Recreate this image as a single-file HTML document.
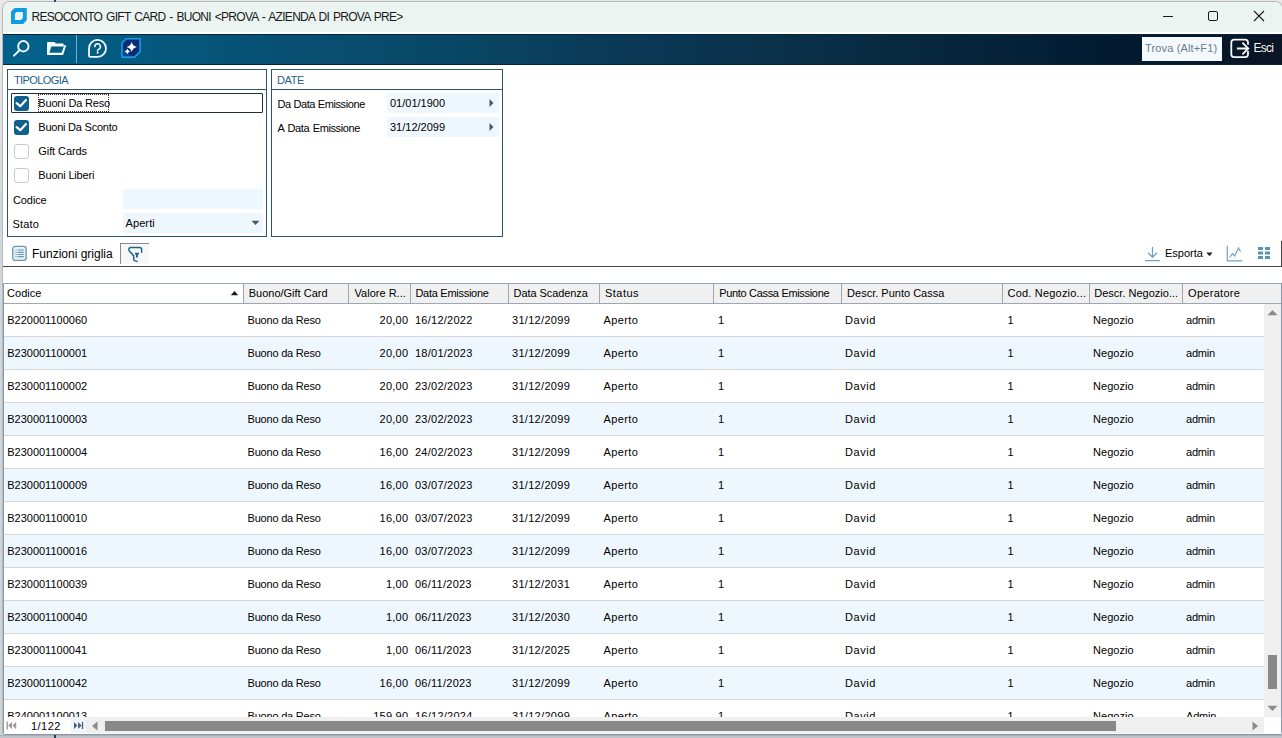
<!DOCTYPE html>
<html><head><meta charset="utf-8">
<style>
*{box-sizing:border-box;margin:0;padding:0}
html,body{width:1282px;height:738px;overflow:hidden;background:#b6b8ba;font-family:"Liberation Sans",sans-serif;font-size:11px;color:#000}
div,span,svg{position:absolute}
.t{white-space:nowrap;letter-spacing:-0.3px;line-height:13px}
.panel{border:1px solid #2b556d;background:#fff}
.cb{width:15px;height:15px;border-radius:3px}
.on{background:#1a6a96}
.off{border:1px solid #c9c9c9;background:#fff}
.inp{background:#eef7fd}
.hc{top:284px;height:19px;background:#f0f0f0;border-right:1px solid #9ca7b3}
.row{left:4px;width:1260px;height:33px;border-bottom:1px solid #d6d9dc;background:#fff}
.alt{background:#eef7fd}
</style></head><body>
<div style="left:0;top:0;width:1282px;height:738px;background:linear-gradient(180deg,#e8e8e8 0px,#e6e6e6 80px,#d0d8dc 200px,#cdd4d7 738px)"></div>
<div style="left:0;top:735px;width:1282px;height:1px;background:#a8b0b8"></div>
<div style="left:0;top:736px;width:1282px;height:2px;background:#c0c4c8"></div>
<div style="left:54px;top:735px;width:2px;height:3px;background:#1a4262"></div>
<div style="left:2px;top:1px;width:1281px;height:734px;border:1px solid #b5b9bb;border-bottom-color:#8a96a6;border-radius:8px 8px 4px 4px;background:#fff"></div>
<div style="left:3px;top:2px;width:1279px;height:30px;background:#ebf4f1;border-radius:7px 7px 0 0"></div>

<svg style="left:11px;top:8px" width="17" height="16" viewBox="0 0 17 16"><path d="M3.5 0H15.8V11.9L12.2 16H0V3.4Z" fill="#109de0"/><path d="M5.7 3.9H11.9V9.9L9.9 11.9H3.9V5.7Z" fill="#ebf4f1"/></svg>
<span class="t" style="left:31.5px;top:11px;font-size:12px;letter-spacing:-0.72px;word-spacing:1.3px;color:#1a1a1a">RESOCONTO GIFT CARD - BUONI &lt;PROVA - AZIENDA DI PROVA PRE&gt;</span>
<div style="left:1163px;top:16px;width:10px;height:1px;background:#1a1a1a"></div>
<div style="left:1208px;top:11px;width:10px;height:10px;border:1px solid #1a1a1a;border-radius:2px"></div>
<svg style="left:1253px;top:10px" width="12" height="12" viewBox="0 0 12 12"><path d="M1 1L11 11M11 1L1 11" stroke="#1a1a1a" stroke-width="1.1"/></svg>

<div style="left:3px;top:34px;width:1279px;height:31px;background:linear-gradient(90deg,#02628c 0px,#05587d 156px,#084f72 296px,#094766 446px,#0a3a58 596px,#0a3048 796px,#052238 1006px,#011a30 1116px,#0a1526 1277px);border-top:1px solid #05253a;border-bottom:1px solid #052538"></div>
<svg style="left:10px;top:38px" width="24" height="22" viewBox="0 0 24 22"><circle cx="13.35" cy="8.25" r="5.2" fill="none" stroke="#f2fbff" stroke-width="1.9"/><path d="M9.4 12.2L4 17.6" stroke="#f2fbff" stroke-width="2" stroke-linecap="round"/></svg>
<svg style="left:44px;top:38px" width="26" height="20" viewBox="0 0 26 20"><path fill-rule="evenodd" d="M4.2 3.9H10.3L12 5.6H19.5V7.3H22.3L19.1 17.1H4.2Q3 17.1 3 15.9V5.1Q3 3.9 4.2 3.9Z M7.3 8.6H19.9L17.6 14.8H5.4Z" fill="#f4fbff"/></svg>
<div style="left:76px;top:35px;width:1px;height:28px;background:#6fb2d4"></div>
<svg style="left:86px;top:37px" width="24" height="24" viewBox="0 0 24 24"><path d="M3 11.4A8.5 8.5 0 1 1 11.5 19.9H4.6Q3 19.9 3 18.3Z" fill="none" stroke="#f4fbff" stroke-width="1.8" stroke-linejoin="round"/><path d="M8.8 9.6A2.8 2.8 0 1 1 12.9 12.1C11.9 12.6 11.5 13 11.5 14" fill="none" stroke="#f4fbff" stroke-width="1.6" stroke-linecap="round"/><circle cx="11.6" cy="15.8" r="1" fill="#f4fbff"/></svg>
<svg style="left:120px;top:37px" width="22" height="22" viewBox="0 0 22 22"><path d="M6.2 1.7H20.1V14.6L14.6 20.1H2V5.9Z" fill="#082c76" stroke="#1c9be3" stroke-width="1.6" stroke-linejoin="round"/><path d="M2.9 11L11 19.2H2.9Z" fill="#1560b0" opacity="0.45"/><path d="M11.7 4.7Q12.549999999999999 9.05 16.9 9.9Q12.549999999999999 10.75 11.7 15.100000000000001Q10.85 10.75 6.499999999999999 9.9Q10.85 9.05 11.7 4.7Z" fill="#fff"/><path d="M7.4 11.8Q8.15 13.65 10.0 14.4Q8.15 15.15 7.4 17.0Q6.65 15.15 4.800000000000001 14.4Q6.65 13.65 7.4 11.8Z" fill="#fff"/></svg>
<div style="left:1142px;top:37px;width:80px;height:24px;background:#f3f9fd"></div>
<span class="t" style="left:1145px;top:42px;color:#6d7c8a;letter-spacing:0.15px">Trova (Alt+F1)</span>
<svg style="left:1229px;top:38px" width="22" height="22" viewBox="0 0 22 22"><path d="M19 6.8V4.5Q19 1.7 16.2 1.7H5.1Q2.3 1.7 2.3 4.5V16.3Q2.3 19.1 5.1 19.1H16.2Q19 19.1 19 16.3V13.1" fill="none" stroke="#f4f8fa" stroke-width="1.8"/><path d="M7.9 10.5H19.2M13.4 4.6L19.3 10.5L13.4 16.3" fill="none" stroke="#f4f8fa" stroke-width="1.8" stroke-linejoin="miter"/></svg>
<span class="t" style="left:1253.5px;top:41.5px;font-size:12px;color:#f4f4ec;letter-spacing:-0.75px">Esci</span>

<div class="panel" style="left:7px;top:69px;width:260px;height:168px"></div>
<div style="left:8px;top:89px;width:258px;height:1px;background:#2b556d"></div>
<span class="t" style="left:14px;top:73.5px;color:#23628a;letter-spacing:-0.6px">TIPOLOGIA</span>
<div style="left:11px;top:93px;width:252px;height:20px;border:1px solid #1f2d36;border-radius:1px"></div>
<div style="left:38px;top:94px;width:71px;height:18px;border:1px dotted #333"></div>

<svg style="left:14px;top:96px" width="15" height="15" viewBox="0 0 15 15"><rect x="0" y="0" width="15" height="15" rx="3" fill="#115f8c"/><path d="M2.6 7.1L6.3 10.2L12 4.1" fill="none" stroke="#fff" stroke-width="2.2" stroke-linecap="round" stroke-linejoin="round"/></svg>
<svg style="left:14px;top:120px" width="15" height="15" viewBox="0 0 15 15"><rect x="0" y="0" width="15" height="15" rx="3" fill="#115f8c"/><path d="M2.6 7.1L6.3 10.2L12 4.1" fill="none" stroke="#fff" stroke-width="2.2" stroke-linecap="round" stroke-linejoin="round"/></svg>
<div class="cb off" style="left:14px;top:144px"></div>
<div class="cb off" style="left:14px;top:168px"></div>
<span class="t" style="left:38.3px;top:96.5px;letter-spacing:-0.18px">Buoni Da Reso</span>
<span class="t" style="left:38.3px;top:120.5px;letter-spacing:-0.23px">Buoni Da Sconto</span>
<span class="t" style="left:38.3px;top:144.5px;letter-spacing:-0.08px">Gift Cards</span>
<span class="t" style="left:38.3px;top:168.5px;letter-spacing:-0.18px">Buoni Liberi</span>
<span class="t" style="left:13px;top:193.5px;letter-spacing:-0.1px">Codice</span>
<div class="inp" style="left:123px;top:189px;width:140px;height:20px"></div>
<span class="t" style="left:12.5px;top:217.5px;letter-spacing:0.2px">Stato</span>
<div class="inp" style="left:123px;top:213px;width:140px;height:20px"></div>
<span class="t" style="left:125.5px;top:216.5px;letter-spacing:0.1px">Aperti</span>
<svg style="left:251px;top:220px" width="9" height="6" viewBox="0 0 9 6"><path d="M0.5 0.8H8.5L4.5 5Z" fill="#48586c"/></svg>

<div class="panel" style="left:271px;top:69px;width:232px;height:168px"></div>
<div style="left:272px;top:89px;width:230px;height:1px;background:#2b556d"></div>
<span class="t" style="left:277px;top:73.5px;color:#23628a;letter-spacing:-0.4px">DATE</span>
<span class="t" style="left:277.5px;top:97.5px;letter-spacing:-0.4px">Da Data Emissione</span>
<div class="inp" style="left:387px;top:93px;width:112px;height:20px"></div>
<span class="t" style="left:390px;top:96.5px;letter-spacing:0">01/01/1900</span>
<svg style="left:489px;top:99px" width="5" height="8" viewBox="0 0 5 8"><path d="M0.5 0L4.5 4L0.5 8Z" fill="#48586c"/></svg>
<span class="t" style="left:277.5px;top:121.5px;letter-spacing:-0.4px;word-spacing:1px">A Data Emissione</span>
<div class="inp" style="left:387px;top:117px;width:112px;height:20px"></div>
<span class="t" style="left:390px;top:120.5px;letter-spacing:0">31/12/2099</span>
<svg style="left:489px;top:123px" width="5" height="8" viewBox="0 0 5 8"><path d="M0.5 0L4.5 4L0.5 8Z" fill="#48586c"/></svg>

<svg style="left:12px;top:245px" width="16" height="17" viewBox="0 0 16 17"><rect x="0.75" y="1.45" width="13.4" height="14" rx="2.6" fill="#e2f4fb" stroke="#6f93a8" stroke-width="1.3"/><path d="M3.1 5H5.6M3.1 7.4H5.6M3.1 9.5H5.6M3.1 11.7H5.6" stroke="#a9bac3" stroke-width="1.2"/><path d="M6 5H11.8M6 7.4H11.8M6 9.5H11.8M6 11.7H11.8" stroke="#6b95ab" stroke-width="1.2"/></svg>
<span class="t" style="left:32px;top:247.5px;font-size:12px;letter-spacing:0">Funzioni griglia</span>
<div style="left:120px;top:243px;width:29px;height:21px;border-left:1px solid #8a8a8a;border-top:1px solid #8a8a8a;background:#f7f7f7"></div>
<svg style="left:128px;top:246px" width="16" height="17" viewBox="0 0 16 17"><path d="M13.6 6.3V3.6Q13.6 1.5 11.6 1.5H2.9Q0.9 1.5 0.9 3.6Q0.9 4.7 1.8 5.6L5.7 9.8V12.9Q5.7 14.1 6.6 14.6L8.9 15.4" fill="none" stroke="#1d6488" stroke-width="1.5" stroke-linecap="round"/><path d="M6.9 7.6H11M9 7.6V11.6" stroke="#1d6488" stroke-width="1.9"/></svg>
<div style="left:3px;top:266px;width:1279px;height:1px;background:#444"></div>
<div style="left:1281px;top:241px;width:1px;height:26px;background:#444"></div>
<svg style="left:1144px;top:246px" width="17" height="16" viewBox="0 0 17 16"><path d="M8.5 1V11M4 6.8L8.5 11.3L13 6.8" fill="none" stroke="#6fa4bf" stroke-width="1.3"/><path d="M1 14.6H16" stroke="#6fa4bf" stroke-width="1.3"/></svg>
<span class="t" style="left:1165px;top:246.5px;letter-spacing:0">Esporta</span>
<svg style="left:1206px;top:252px" width="7" height="5" viewBox="0 0 7 5"><path d="M0.3 0.5H6.7L3.5 4.2Z" fill="#222"/></svg>
<svg style="left:1226px;top:245px" width="17" height="17" viewBox="0 0 17 17"><path d="M1.3 0.8V15.8H16.2" fill="none" stroke="#6fa4bf" stroke-width="1.2"/><path d="M3.5 12.5L6.5 8.6L8.7 11L12.4 3L14.6 6.6" fill="none" stroke="#6fa4bf" stroke-width="1.2"/></svg>
<svg style="left:1257px;top:246px" width="14" height="14" viewBox="0 0 14 14"><g fill="#5d94b0"><rect x="1" y="1" width="5" height="3"/><rect x="8" y="1" width="5" height="3"/><rect x="1" y="5.5" width="5" height="3"/><rect x="8" y="5.5" width="5" height="3"/><rect x="1" y="10" width="5" height="3"/><rect x="8" y="10" width="5" height="3"/></g></svg>

<div style="left:4px;top:283px;width:1278px;height:21px;border-top:1px solid #9ca7b3;border-bottom:1px solid #9ca7b3;border-right:1px solid #9ca7b3;background:#f0f0f0"></div>
<div class="hc" style="left:4px;width:240px;background:#fff"></div>
<span class="t" style="left:7.1px;top:287px;letter-spacing:0px">Codice</span>
<div class="hc" style="left:244px;width:105px;background:#f0f0f0"></div>
<span class="t" style="left:248.7px;top:287px;letter-spacing:0px">Buono/Gift Card</span>
<div class="hc" style="left:349px;width:62px;background:#f0f0f0"></div>
<span class="t" style="left:354.6px;top:287px;letter-spacing:0px">Valore R...</span>
<div class="hc" style="left:411px;width:98px;background:#f0f0f0"></div>
<span class="t" style="left:415.4px;top:287px;letter-spacing:-0.27px">Data Emissione</span>
<div class="hc" style="left:509px;width:91px;background:#f0f0f0"></div>
<span class="t" style="left:513.6px;top:287px;letter-spacing:-0.08px">Data Scadenza</span>
<div class="hc" style="left:600px;width:114px;background:#f0f0f0"></div>
<span class="t" style="left:605px;top:287px;letter-spacing:0.46px">Status</span>
<div class="hc" style="left:714px;width:128px;background:#f0f0f0"></div>
<span class="t" style="left:719.2px;top:287px;letter-spacing:-0.32px">Punto Cassa Emissione</span>
<div class="hc" style="left:842px;width:161px;background:#f0f0f0"></div>
<span class="t" style="left:847.1px;top:287px;letter-spacing:0px">Descr. Punto Cassa</span>
<div class="hc" style="left:1003px;width:87px;background:#f0f0f0"></div>
<span class="t" style="left:1007.5px;top:287px;letter-spacing:0.2px">Cod. Negozio...</span>
<div class="hc" style="left:1090px;width:93px;background:#f0f0f0"></div>
<span class="t" style="left:1094.3px;top:287px;letter-spacing:0px">Descr. Negozio...</span>
<div class="hc" style="left:1183px;width:99px;background:#f0f0f0"></div>
<span class="t" style="left:1188.1px;top:287px;letter-spacing:0.29px">Operatore</span>
<svg style="left:230px;top:290px" width="9" height="6" viewBox="0 0 9 6"><path d="M0.8 5.2H8.2L4.5 1Z" fill="#1a1a1a"/></svg>
<div class="row" style="top:304px"></div>
<span class="t" style="left:7.2px;top:314px;letter-spacing:0px">B220001100060</span>
<span class="t" style="left:247.5px;top:314px;letter-spacing:-0.2px">Buono da Reso</span>
<span class="t" style="right:873.7px;top:314px;letter-spacing:0.25px">20,00</span>
<span class="t" style="left:415px;top:314px;letter-spacing:0.25px">16/12/2022</span>
<span class="t" style="left:512px;top:314px;letter-spacing:0.3px">31/12/2099</span>
<span class="t" style="left:603.5px;top:314px;letter-spacing:0.4px">Aperto</span>
<span class="t" style="left:718px;top:314px;letter-spacing:0px">1</span>
<span class="t" style="left:845px;top:314px;letter-spacing:0.55px">David</span>
<span class="t" style="left:1007.5px;top:314px;letter-spacing:0px">1</span>
<span class="t" style="left:1093px;top:314px;letter-spacing:0.05px">Negozio</span>
<span class="t" style="left:1186px;top:314px;letter-spacing:-0.2px">admin</span>
<div class="row alt" style="top:337px"></div>
<span class="t" style="left:7.2px;top:347px;letter-spacing:0px">B230001100001</span>
<span class="t" style="left:247.5px;top:347px;letter-spacing:-0.2px">Buono da Reso</span>
<span class="t" style="right:873.7px;top:347px;letter-spacing:0.25px">20,00</span>
<span class="t" style="left:415px;top:347px;letter-spacing:0.25px">18/01/2023</span>
<span class="t" style="left:512px;top:347px;letter-spacing:0.3px">31/12/2099</span>
<span class="t" style="left:603.5px;top:347px;letter-spacing:0.4px">Aperto</span>
<span class="t" style="left:718px;top:347px;letter-spacing:0px">1</span>
<span class="t" style="left:845px;top:347px;letter-spacing:0.55px">David</span>
<span class="t" style="left:1007.5px;top:347px;letter-spacing:0px">1</span>
<span class="t" style="left:1093px;top:347px;letter-spacing:0.05px">Negozio</span>
<span class="t" style="left:1186px;top:347px;letter-spacing:-0.2px">admin</span>
<div class="row" style="top:370px"></div>
<span class="t" style="left:7.2px;top:380px;letter-spacing:0px">B230001100002</span>
<span class="t" style="left:247.5px;top:380px;letter-spacing:-0.2px">Buono da Reso</span>
<span class="t" style="right:873.7px;top:380px;letter-spacing:0.25px">20,00</span>
<span class="t" style="left:415px;top:380px;letter-spacing:0.25px">23/02/2023</span>
<span class="t" style="left:512px;top:380px;letter-spacing:0.3px">31/12/2099</span>
<span class="t" style="left:603.5px;top:380px;letter-spacing:0.4px">Aperto</span>
<span class="t" style="left:718px;top:380px;letter-spacing:0px">1</span>
<span class="t" style="left:845px;top:380px;letter-spacing:0.55px">David</span>
<span class="t" style="left:1007.5px;top:380px;letter-spacing:0px">1</span>
<span class="t" style="left:1093px;top:380px;letter-spacing:0.05px">Negozio</span>
<span class="t" style="left:1186px;top:380px;letter-spacing:-0.2px">admin</span>
<div class="row alt" style="top:403px"></div>
<span class="t" style="left:7.2px;top:413px;letter-spacing:0px">B230001100003</span>
<span class="t" style="left:247.5px;top:413px;letter-spacing:-0.2px">Buono da Reso</span>
<span class="t" style="right:873.7px;top:413px;letter-spacing:0.25px">20,00</span>
<span class="t" style="left:415px;top:413px;letter-spacing:0.25px">23/02/2023</span>
<span class="t" style="left:512px;top:413px;letter-spacing:0.3px">31/12/2099</span>
<span class="t" style="left:603.5px;top:413px;letter-spacing:0.4px">Aperto</span>
<span class="t" style="left:718px;top:413px;letter-spacing:0px">1</span>
<span class="t" style="left:845px;top:413px;letter-spacing:0.55px">David</span>
<span class="t" style="left:1007.5px;top:413px;letter-spacing:0px">1</span>
<span class="t" style="left:1093px;top:413px;letter-spacing:0.05px">Negozio</span>
<span class="t" style="left:1186px;top:413px;letter-spacing:-0.2px">admin</span>
<div class="row" style="top:436px"></div>
<span class="t" style="left:7.2px;top:446px;letter-spacing:0px">B230001100004</span>
<span class="t" style="left:247.5px;top:446px;letter-spacing:-0.2px">Buono da Reso</span>
<span class="t" style="right:873.7px;top:446px;letter-spacing:0.25px">16,00</span>
<span class="t" style="left:415px;top:446px;letter-spacing:0.25px">24/02/2023</span>
<span class="t" style="left:512px;top:446px;letter-spacing:0.3px">31/12/2099</span>
<span class="t" style="left:603.5px;top:446px;letter-spacing:0.4px">Aperto</span>
<span class="t" style="left:718px;top:446px;letter-spacing:0px">1</span>
<span class="t" style="left:845px;top:446px;letter-spacing:0.55px">David</span>
<span class="t" style="left:1007.5px;top:446px;letter-spacing:0px">1</span>
<span class="t" style="left:1093px;top:446px;letter-spacing:0.05px">Negozio</span>
<span class="t" style="left:1186px;top:446px;letter-spacing:-0.2px">admin</span>
<div class="row alt" style="top:469px"></div>
<span class="t" style="left:7.2px;top:479px;letter-spacing:0px">B230001100009</span>
<span class="t" style="left:247.5px;top:479px;letter-spacing:-0.2px">Buono da Reso</span>
<span class="t" style="right:873.7px;top:479px;letter-spacing:0.25px">16,00</span>
<span class="t" style="left:415px;top:479px;letter-spacing:0.25px">03/07/2023</span>
<span class="t" style="left:512px;top:479px;letter-spacing:0.3px">31/12/2099</span>
<span class="t" style="left:603.5px;top:479px;letter-spacing:0.4px">Aperto</span>
<span class="t" style="left:718px;top:479px;letter-spacing:0px">1</span>
<span class="t" style="left:845px;top:479px;letter-spacing:0.55px">David</span>
<span class="t" style="left:1007.5px;top:479px;letter-spacing:0px">1</span>
<span class="t" style="left:1093px;top:479px;letter-spacing:0.05px">Negozio</span>
<span class="t" style="left:1186px;top:479px;letter-spacing:-0.2px">admin</span>
<div class="row" style="top:502px"></div>
<span class="t" style="left:7.2px;top:512px;letter-spacing:0px">B230001100010</span>
<span class="t" style="left:247.5px;top:512px;letter-spacing:-0.2px">Buono da Reso</span>
<span class="t" style="right:873.7px;top:512px;letter-spacing:0.25px">16,00</span>
<span class="t" style="left:415px;top:512px;letter-spacing:0.25px">03/07/2023</span>
<span class="t" style="left:512px;top:512px;letter-spacing:0.3px">31/12/2099</span>
<span class="t" style="left:603.5px;top:512px;letter-spacing:0.4px">Aperto</span>
<span class="t" style="left:718px;top:512px;letter-spacing:0px">1</span>
<span class="t" style="left:845px;top:512px;letter-spacing:0.55px">David</span>
<span class="t" style="left:1007.5px;top:512px;letter-spacing:0px">1</span>
<span class="t" style="left:1093px;top:512px;letter-spacing:0.05px">Negozio</span>
<span class="t" style="left:1186px;top:512px;letter-spacing:-0.2px">admin</span>
<div class="row alt" style="top:535px"></div>
<span class="t" style="left:7.2px;top:545px;letter-spacing:0px">B230001100016</span>
<span class="t" style="left:247.5px;top:545px;letter-spacing:-0.2px">Buono da Reso</span>
<span class="t" style="right:873.7px;top:545px;letter-spacing:0.25px">16,00</span>
<span class="t" style="left:415px;top:545px;letter-spacing:0.25px">03/07/2023</span>
<span class="t" style="left:512px;top:545px;letter-spacing:0.3px">31/12/2099</span>
<span class="t" style="left:603.5px;top:545px;letter-spacing:0.4px">Aperto</span>
<span class="t" style="left:718px;top:545px;letter-spacing:0px">1</span>
<span class="t" style="left:845px;top:545px;letter-spacing:0.55px">David</span>
<span class="t" style="left:1007.5px;top:545px;letter-spacing:0px">1</span>
<span class="t" style="left:1093px;top:545px;letter-spacing:0.05px">Negozio</span>
<span class="t" style="left:1186px;top:545px;letter-spacing:-0.2px">admin</span>
<div class="row" style="top:568px"></div>
<span class="t" style="left:7.2px;top:578px;letter-spacing:0px">B230001100039</span>
<span class="t" style="left:247.5px;top:578px;letter-spacing:-0.2px">Buono da Reso</span>
<span class="t" style="right:873.7px;top:578px;letter-spacing:0.25px">1,00</span>
<span class="t" style="left:415px;top:578px;letter-spacing:0.25px">06/11/2023</span>
<span class="t" style="left:512px;top:578px;letter-spacing:0.3px">31/12/2031</span>
<span class="t" style="left:603.5px;top:578px;letter-spacing:0.4px">Aperto</span>
<span class="t" style="left:718px;top:578px;letter-spacing:0px">1</span>
<span class="t" style="left:845px;top:578px;letter-spacing:0.55px">David</span>
<span class="t" style="left:1007.5px;top:578px;letter-spacing:0px">1</span>
<span class="t" style="left:1093px;top:578px;letter-spacing:0.05px">Negozio</span>
<span class="t" style="left:1186px;top:578px;letter-spacing:-0.2px">admin</span>
<div class="row alt" style="top:601px"></div>
<span class="t" style="left:7.2px;top:611px;letter-spacing:0px">B230001100040</span>
<span class="t" style="left:247.5px;top:611px;letter-spacing:-0.2px">Buono da Reso</span>
<span class="t" style="right:873.7px;top:611px;letter-spacing:0.25px">1,00</span>
<span class="t" style="left:415px;top:611px;letter-spacing:0.25px">06/11/2023</span>
<span class="t" style="left:512px;top:611px;letter-spacing:0.3px">31/12/2030</span>
<span class="t" style="left:603.5px;top:611px;letter-spacing:0.4px">Aperto</span>
<span class="t" style="left:718px;top:611px;letter-spacing:0px">1</span>
<span class="t" style="left:845px;top:611px;letter-spacing:0.55px">David</span>
<span class="t" style="left:1007.5px;top:611px;letter-spacing:0px">1</span>
<span class="t" style="left:1093px;top:611px;letter-spacing:0.05px">Negozio</span>
<span class="t" style="left:1186px;top:611px;letter-spacing:-0.2px">admin</span>
<div class="row" style="top:634px"></div>
<span class="t" style="left:7.2px;top:644px;letter-spacing:0px">B230001100041</span>
<span class="t" style="left:247.5px;top:644px;letter-spacing:-0.2px">Buono da Reso</span>
<span class="t" style="right:873.7px;top:644px;letter-spacing:0.25px">1,00</span>
<span class="t" style="left:415px;top:644px;letter-spacing:0.25px">06/11/2023</span>
<span class="t" style="left:512px;top:644px;letter-spacing:0.3px">31/12/2025</span>
<span class="t" style="left:603.5px;top:644px;letter-spacing:0.4px">Aperto</span>
<span class="t" style="left:718px;top:644px;letter-spacing:0px">1</span>
<span class="t" style="left:845px;top:644px;letter-spacing:0.55px">David</span>
<span class="t" style="left:1007.5px;top:644px;letter-spacing:0px">1</span>
<span class="t" style="left:1093px;top:644px;letter-spacing:0.05px">Negozio</span>
<span class="t" style="left:1186px;top:644px;letter-spacing:-0.2px">admin</span>
<div class="row alt" style="top:667px"></div>
<span class="t" style="left:7.2px;top:677px;letter-spacing:0px">B230001100042</span>
<span class="t" style="left:247.5px;top:677px;letter-spacing:-0.2px">Buono da Reso</span>
<span class="t" style="right:873.7px;top:677px;letter-spacing:0.25px">16,00</span>
<span class="t" style="left:415px;top:677px;letter-spacing:0.25px">06/11/2023</span>
<span class="t" style="left:512px;top:677px;letter-spacing:0.3px">31/12/2099</span>
<span class="t" style="left:603.5px;top:677px;letter-spacing:0.4px">Aperto</span>
<span class="t" style="left:718px;top:677px;letter-spacing:0px">1</span>
<span class="t" style="left:845px;top:677px;letter-spacing:0.55px">David</span>
<span class="t" style="left:1007.5px;top:677px;letter-spacing:0px">1</span>
<span class="t" style="left:1093px;top:677px;letter-spacing:0.05px">Negozio</span>
<span class="t" style="left:1186px;top:677px;letter-spacing:-0.2px">admin</span>
<div class="row" style="top:700px"></div>
<span class="t" style="left:7.2px;top:710px;letter-spacing:0px">B240001100013</span>
<span class="t" style="left:247.5px;top:710px;letter-spacing:-0.2px">Buono da Reso</span>
<span class="t" style="right:873.7px;top:710px;letter-spacing:0.25px">159,90</span>
<span class="t" style="left:415px;top:710px;letter-spacing:0.25px">16/12/2024</span>
<span class="t" style="left:512px;top:710px;letter-spacing:0.3px">31/12/2099</span>
<span class="t" style="left:603.5px;top:710px;letter-spacing:0.4px">Aperto</span>
<span class="t" style="left:718px;top:710px;letter-spacing:0px">1</span>
<span class="t" style="left:845px;top:710px;letter-spacing:0.55px">David</span>
<span class="t" style="left:1007.5px;top:710px;letter-spacing:0px">1</span>
<span class="t" style="left:1093px;top:710px;letter-spacing:0.05px">Negozio</span>
<span class="t" style="left:1186px;top:710px;letter-spacing:-0.2px">Admin</span>
<div style="left:3px;top:283px;width:1px;height:451px;background:#8a9aa8"></div>
<div style="left:1281px;top:283px;width:1px;height:448px;background:#8a96a6"></div>
<div style="left:1280px;top:304px;width:1px;height:413px;background:#eaf4ff"></div>
<svg style="left:1276px;top:729px" width="6" height="6" viewBox="0 0 6 6"><path d="M5.5 0V2Q5.5 5.5 2 5.5H0" fill="none" stroke="#8a96a6"/></svg>
<div style="left:1264px;top:304px;width:17px;height:413px;background:#f0f0f0"></div>
<svg style="left:1267px;top:309px" width="11" height="7" viewBox="0 0 11 7"><path d="M0.5 6.3H10.5L5.5 1Z" fill="#8a8a8a"/></svg>
<div style="left:1268px;top:655px;width:9px;height:34px;background:#888"></div>
<svg style="left:1267px;top:705px" width="11" height="7" viewBox="0 0 11 7"><path d="M0.5 0.7H10.5L5.5 6Z" fill="#8a8a8a"/></svg>
<div style="left:1264px;top:717px;width:17px;height:17px;background:#fff"></div>

<div style="left:4px;top:717px;width:1260px;height:16px;background:#efefef"></div>
<div style="left:4px;top:717px;width:67px;height:17px;background:#fff"></div>
<div style="left:71px;top:717px;width:15px;height:16px;background:#eef5fb"></div>
<div style="left:86px;top:733px;width:1178px;height:1px;background:#f8fafc"></div>
<svg style="left:6px;top:721px" width="11" height="9" viewBox="0 0 11 9"><path d="M1.2 0.5V8.5" stroke="#9a9a9a" stroke-width="1.4"/><path d="M6 0.8V8.2L2.3 4.5Z M10.2 0.8V8.2L6.5 4.5Z" fill="#9a9a9a"/></svg>
<span class="t" style="left:31px;top:719.5px;letter-spacing:0.45px">1/122</span>
<svg style="left:73px;top:721px" width="11" height="9" viewBox="0 0 11 9"><path d="M1 1V8L4.4 4.5Z M5.1 1V8L8.5 4.5Z" fill="#4a5d78"/><path d="M9.5 1V8" stroke="#4a5d78" stroke-width="1.3"/></svg>
<svg style="left:91px;top:721px" width="7" height="10" viewBox="0 0 7 10"><path d="M6.5 0.5V9.5L1 5Z" fill="#8a8a8a"/></svg>
<div style="left:105px;top:721px;width:11px;height:10px;background:#888"></div>
<div style="left:105px;top:721px;width:1011px;height:10px;background:#888"></div>
<svg style="left:1252px;top:721px" width="7" height="10" viewBox="0 0 7 10"><path d="M0.5 0.5V9.5L6 5Z" fill="#8a8a8a"/></svg>

<div style="left:54px;top:0;width:2px;height:2px;background:#1f4a6a"></div>
</body></html>
